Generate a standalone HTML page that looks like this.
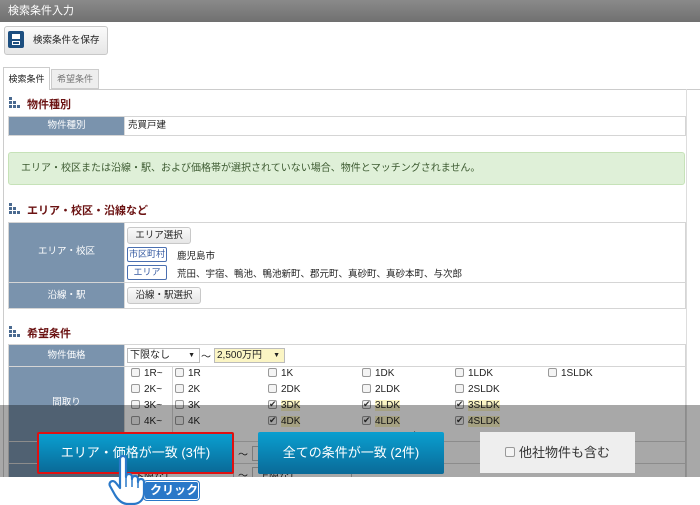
<!DOCTYPE html>
<html><head><meta charset="utf-8"><style>
*{margin:0;padding:0;box-sizing:border-box}
body{width:700px;height:505px;overflow:hidden;background:#fff;font-family:"Liberation Sans","Noto Sans CJK JP",sans-serif;font-size:10px;color:#222;position:relative}
.a{position:absolute}
.hdr{left:0;top:0;width:700px;height:22px;background:linear-gradient(#8a8a8a,#707070);color:#fff;font-size:11px;line-height:22px;padding-left:8px}
.lbl{background:#7a93ad;color:#fff;text-align:center;border-right:1px solid #d8d8d8}
.tb{border:1px solid #d5d5d5;background:#fff}
.h{color:#6b1212;font-weight:bold;font-size:11px}
.ic{width:12px;height:11px}
.btn{background:linear-gradient(#fafafa,#e6e6e6);border:1px solid #c8c8c8;border-radius:3px;text-align:center;line-height:15px;font-size:9.5px}
.tag{border:1px solid #4a6fb0;color:#3358a0;border-radius:2px;text-align:center;font-size:9px;line-height:13px}
.cb{width:9px;height:9px;border:1px solid #999;background:#f4f4f4;border-radius:2px;display:inline-block;vertical-align:-1px;margin-right:4px;position:relative}
.ck::after{content:"✔";position:absolute;left:0;top:-4px;font-size:9px;color:#333}
.it{font-size:10px;line-height:14px;white-space:nowrap}
.y{background:#fbf5c4}
.bb{background:linear-gradient(#0a9fd0,#0a6a98);color:#fff;text-align:center;font-size:13px;border-radius:2px}
</style></head><body>
<div class="a hdr">検索条件入力</div>
<div class="a btn" style="left:4px;top:26px;width:104px;height:29px;line-height:27px;text-align:left;padding-left:28px;font-size:9.5px">検索条件を保存</div>
<div class="a" style="left:8px;top:31px;width:16px;height:17px;background:#1d4f80;border-radius:2px"><div class="a" style="left:4px;top:3px;width:8px;height:5px;background:#fff"></div><div class="a" style="left:4px;top:10px;width:8px;height:4px;border:1px solid #fff"></div></div>

<div class="a" style="left:50px;top:89px;width:650px;height:1px;background:#ccc"></div>
<div class="a" style="left:3px;top:89px;width:1px;height:388px;background:#ccc"></div>
<div class="a" style="left:686px;top:89px;width:1px;height:388px;background:#ddd"></div>
<div class="a" style="left:3px;top:67px;width:47px;height:23px;border:1px solid #ccc;border-bottom:none;background:#fff;font-size:9px;line-height:22px;text-align:center">検索条件</div>
<div class="a" style="left:51px;top:69px;width:48px;height:20px;border:1px solid #ccc;background:#eee;color:#777;font-size:9px;line-height:19px;text-align:center">希望条件</div>

<svg class="a ic" style="left:9px;top:97px" viewBox="0 0 12 11"><g fill="#4a6a90"><rect x="0" y="0" width="3" height="3"/><rect x="0" y="4" width="3" height="3"/><rect x="4" y="4" width="3" height="3"/><rect x="0" y="8" width="3" height="3"/><rect x="4" y="8" width="3" height="3"/><rect x="8" y="8" width="3" height="3"/></g></svg>
<div class="a h" style="left:27px;top:96px">物件種別</div>
<div class="a tb" style="left:8px;top:116px;width:678px;height:20px"></div>
<div class="a lbl" style="left:9px;top:117px;width:116px;height:18px;line-height:18px;font-size:9.5px">物件種別</div>
<div class="a" style="left:128px;top:117px;line-height:18px;font-size:9.5px">売買戸建</div>

<div class="a" style="left:8px;top:152px;width:677px;height:33px;background:#dff0d8;border:1px solid #c6e2b8;border-radius:3px;color:#3c5a30;font-size:10px;line-height:31px;padding-left:12px">エリア・校区または沿線・駅、および価格帯が選択されていない場合、物件とマッチングされません。</div>

<svg class="a ic" style="left:9px;top:203px" viewBox="0 0 12 11"><g fill="#4a6a90"><rect x="0" y="0" width="3" height="3"/><rect x="0" y="4" width="3" height="3"/><rect x="4" y="4" width="3" height="3"/><rect x="0" y="8" width="3" height="3"/><rect x="4" y="8" width="3" height="3"/><rect x="8" y="8" width="3" height="3"/></g></svg>
<div class="a h" style="left:27px;top:202px">エリア・校区・沿線など</div>
<div class="a tb" style="left:8px;top:222px;width:678px;height:87px"></div>
<div class="a lbl" style="left:9px;top:223px;width:116px;height:59px;line-height:58px;font-size:9.5px">エリア・校区</div>
<div class="a" style="left:9px;top:282px;width:677px;height:1px;background:#d5d5d5"></div>
<div class="a lbl" style="left:9px;top:283px;width:116px;height:25px;line-height:25px;font-size:9.5px">沿線・駅</div>
<div class="a btn" style="left:127px;top:227px;width:64px;height:17px">エリア選択</div>
<div class="a tag" style="left:127px;top:247px;width:40px;height:15px">市区町村</div>
<div class="a" style="left:177px;top:248px;font-size:9.5px">鹿児島市</div>
<div class="a tag" style="left:127px;top:265px;width:40px;height:15px">エリア</div>
<div class="a" style="left:177px;top:266px;font-size:9.5px">荒田、宇宿、鴨池、鴨池新町、郡元町、真砂町、真砂本町、与次郎</div>
<div class="a btn" style="left:127px;top:287px;width:74px;height:17px">沿線・駅選択</div>

<svg class="a ic" style="left:9px;top:326px" viewBox="0 0 12 11"><g fill="#4a6a90"><rect x="0" y="0" width="3" height="3"/><rect x="0" y="4" width="3" height="3"/><rect x="4" y="4" width="3" height="3"/><rect x="0" y="8" width="3" height="3"/><rect x="4" y="8" width="3" height="3"/><rect x="8" y="8" width="3" height="3"/></g></svg>
<div class="a h" style="left:27px;top:325px">希望条件</div>
<div class="a tb" style="left:8px;top:344px;width:678px;height:140px"></div>
<div class="a lbl" style="left:9px;top:345px;width:116px;height:21px;line-height:21px;font-size:9.5px">物件価格</div>
<div class="a" style="left:9px;top:366px;width:677px;height:1px;background:#d5d5d5"></div>
<div class="a lbl" style="left:9px;top:367px;width:116px;height:74px;line-height:72px;font-size:9.5px">間取り</div>
<div class="a" style="left:9px;top:441px;width:677px;height:1px;background:#d5d5d5"></div>
<div class="a lbl" style="left:9px;top:442px;width:116px;height:21px"></div>
<div class="a" style="left:9px;top:463px;width:677px;height:1px;background:#d5d5d5"></div>
<div class="a lbl" style="left:9px;top:464px;width:116px;height:20px"></div>
<div class="a" style="left:127px;top:348px;width:73px;height:15px;border:1px solid #bbb;font-size:10px;line-height:13px;padding-left:2px">下限なし<span style="position:absolute;right:4px;font-size:7px">▼</span></div>
<div class="a" style="left:201px;top:348px;font-size:10px">～</div>
<div class="a y" style="left:214px;top:348px;width:71px;height:15px;border:1px solid #bbb;font-size:10px;line-height:13px;padding-left:2px">2,500万円<span style="position:absolute;right:4px;font-size:7px">▼</span></div>
<div class="a" style="left:172px;top:367px;width:1px;height:74px;background:#d5d5d5"></div>

<div class="a it" style="left:131px;top:367px"><span class="cb"></span>1R~</div>
<div class="a it" style="left:131px;top:383px"><span class="cb"></span>2K~</div>
<div class="a it" style="left:131px;top:399px"><span class="cb"></span>3K~</div>
<div class="a it" style="left:131px;top:415px"><span class="cb"></span>4K~</div>
<div class="a it" style="left:131px;top:431px"><span class="cb"></span>5K~</div>
<div class="a it" style="left:175px;top:367px"><span class="cb"></span>1R</div>
<div class="a it" style="left:175px;top:383px"><span class="cb"></span>2K</div>
<div class="a it" style="left:175px;top:399px"><span class="cb"></span>3K</div>
<div class="a it" style="left:175px;top:415px"><span class="cb"></span>4K</div>
<div class="a it" style="left:175px;top:431px"><span class="cb"></span>5K</div>
<div class="a it" style="left:268px;top:367px"><span class="cb"></span>1K</div>
<div class="a it" style="left:268px;top:383px"><span class="cb"></span>2DK</div>
<div class="a it" style="left:268px;top:399px"><span class="cb ck"></span><span class="y">3DK</span></div>
<div class="a it" style="left:268px;top:415px"><span class="cb ck"></span><span class="y">4DK</span></div>
<div class="a it" style="left:268px;top:431px"><span class="cb ck"></span><span class="y">5DK</span></div>
<div class="a it" style="left:362px;top:367px"><span class="cb"></span>1DK</div>
<div class="a it" style="left:362px;top:383px"><span class="cb"></span>2LDK</div>
<div class="a it" style="left:362px;top:399px"><span class="cb ck"></span><span class="y">3LDK</span></div>
<div class="a it" style="left:362px;top:415px"><span class="cb ck"></span><span class="y">4LDK</span></div>
<div class="a it" style="left:362px;top:431px"><span class="cb ck"></span><span class="y">5LDK以上</span></div>
<div class="a it" style="left:455px;top:367px"><span class="cb"></span>1LDK</div>
<div class="a it" style="left:455px;top:383px"><span class="cb"></span>2SLDK</div>
<div class="a it" style="left:455px;top:399px"><span class="cb ck"></span><span class="y">3SLDK</span></div>
<div class="a it" style="left:455px;top:415px"><span class="cb ck"></span><span class="y">4SLDK</span></div>
<div class="a it" style="left:548px;top:367px"><span class="cb"></span>1SLDK</div>

<div class="a" style="left:127px;top:446px;width:107px;height:15px;border:1px solid #bbb;background:#fff"></div>
<div class="a" style="left:238px;top:446px;font-size:10px">～</div>
<div class="a" style="left:252px;top:446px;width:100px;height:15px;border:1px solid #bbb;background:#fff"></div>
<div class="a" style="left:127px;top:467px;width:107px;height:15px;border:1px solid #bbb;background:#fff;font-size:10px;padding-left:6px">下限なし</div>
<div class="a" style="left:238px;top:467px;font-size:10px">～</div>
<div class="a" style="left:252px;top:467px;width:100px;height:15px;border:1px solid #bbb;background:#fff;font-size:10px;padding-left:6px">上限なし</div>

<div class="a" style="left:0;top:405px;width:700px;height:72px;background:rgba(0,0,0,0.34)"></div>
<div class="a" style="left:0;top:477px;width:700px;height:28px;background:#fff"></div>

<div class="a bb" style="left:37px;top:432px;width:197px;height:42px;line-height:38px;border:2px solid #e01010">エリア・価格が一致 (3件)</div>
<div class="a bb" style="left:258px;top:432px;width:186px;height:42px;line-height:42px">全ての条件が一致 (2件)</div>
<div class="a" style="left:480px;top:432px;width:155px;height:41px;background:#eee;text-align:center;line-height:41px;font-size:13px;color:#333"><span class="cb" style="width:10px;height:10px;vertical-align:0"></span>他社物件も含む</div>

<div class="a" style="left:144px;top:481px;width:55px;height:19px;background:#2a78c8;border:1px solid #fff;border-radius:3px;box-shadow:0 0 0 1px #2a78c8;color:#fff;font-weight:bold;font-size:12px;line-height:17px;padding-left:5px">クリック</div>
<svg class="a" style="left:108px;top:455px" width="46" height="50" viewBox="0 0 46 50">
<path d="M12 4 C12 0 18 0 18 4 L18 22 C18 18 24 18 24 22 L24 24 C24 20 30 20 30 24 L30 27 C30 23 36 23 36 27 L36 38 C36 45 31 49 25 49 L20 49 C14 49 10 45 7 40 L2 31 C0 27 5 24 8 28 L12 33 Z" fill="#fff" stroke="#2a78c8" stroke-width="2.2" stroke-linejoin="round"/>
<path d="M18 22 L18 32 M24 24 L24 32 M30 27 L30 33" stroke="#2a78c8" stroke-width="1.5"/>
</svg>
</body></html>
